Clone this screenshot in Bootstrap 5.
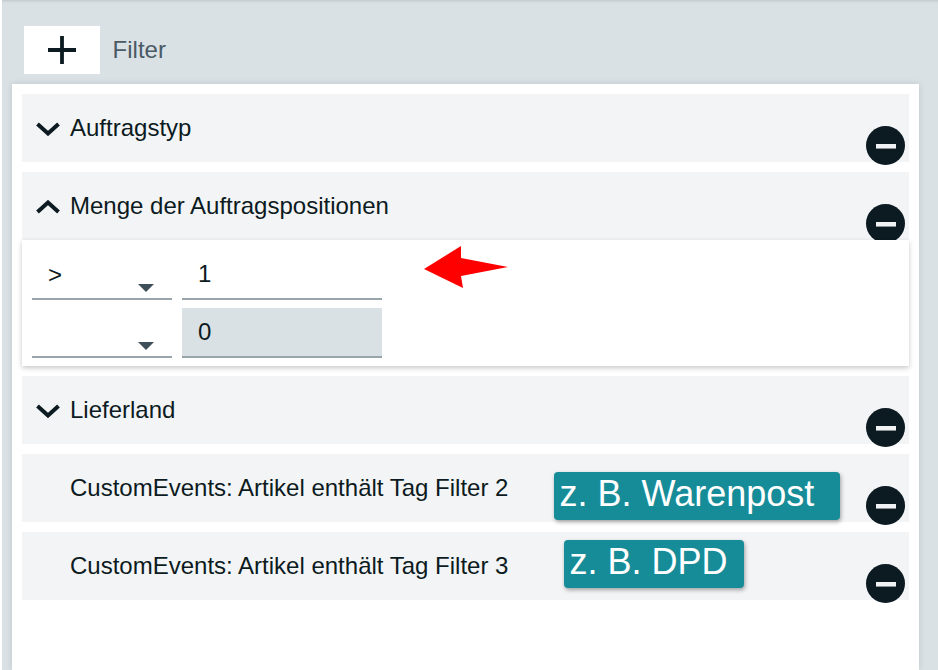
<!DOCTYPE html>
<html lang="de">
<head>
<meta charset="utf-8">
<title>Filter</title>
<link href="https://cdn.jsdelivr.net/npm/bootstrap@5.3.0/dist/css/bootstrap.min.css" rel="stylesheet">
<style>
html,body{height:100%;overflow:hidden}
body{background:#fff;font-family:"Liberation Sans",Arial,sans-serif;font-size:24px;color:#0c1a21;line-height:1.2}
.shell{height:670px;margin-left:2px;background:#dae1e4;padding-top:26px;box-shadow:inset 0 3px 3px -2px rgba(0,0,0,.12)}
.filter-head{height:48px;padding-left:22px;margin-bottom:10px}
.add-btn{width:76px;height:48px;background:#fff;border:0;border-radius:0;padding:0}
.filter-title{margin-left:12.6px;color:#4a5a64}
.sheet{margin-left:10px;width:907px;height:586px;background:#fff;padding:10px;box-shadow:0 0 6px rgba(0,0,0,.12)}
.frow{position:relative;height:68px;background:#f3f4f6;margin-bottom:10px;padding-left:48px}
.frow.open{margin-bottom:0}
.chev{position:absolute;left:14px;top:50%;margin-top:-6px}
.rm{position:absolute;left:844px;top:32px;width:39px;height:39px;border-radius:50%;background:#0c1a21;display:flex;align-items:center;justify-content:center}
.rm i{display:block;width:20px;height:4px;background:#f1f2f3;box-shadow:0 1px 0 #8b9296}
.fbody{position:relative;z-index:2;height:126px;background:#fff;padding:10px 10px 8px;margin-bottom:10px;box-shadow:0 2px 5px rgba(0,0,0,.22)}
.fline{height:50px;gap:10px;margin-bottom:8px}
.fline:last-child{margin-bottom:0}
.selbox{position:relative;width:140px;height:50px}
.selbox .form-select{height:50px;background:transparent none;border:0;border-bottom:2px solid #98a5ab;border-radius:0;font-size:24px;padding:2px 0 0 16px;color:#0c1a21;box-shadow:none}
.selbox::after{content:"";position:absolute;left:106px;top:34px;border:8px solid transparent;border-top-color:#3f4f59;border-bottom:0}
.numbox{width:200px;height:50px;border:0;border-bottom:2px solid #98a5ab;border-radius:0;font-size:24px;padding:0 0 0 16px;color:#0c1a21;background:transparent;box-shadow:none}
.numbox:disabled{background:#dae1e4;opacity:1}
.pointer{position:absolute;left:402px;top:5px}
.hint{position:absolute;height:48px;background:#178c99;color:#fff;font-size:36px;line-height:44px;padding-left:5.6px;border-radius:4px;box-shadow:1px 2px 4px rgba(0,0,0,.35);white-space:nowrap}
.hint-a{left:532px;top:18px;width:286px}
.hint-b{left:542px;top:8px;width:180px}
</style>
</head>
<body>
<div class="shell">
  <div class="filter-head d-flex align-items-center">
    <button class="add-btn d-flex align-items-center justify-content-center" type="button" aria-label="Filter hinzufügen">
      <svg width="28" height="28" viewBox="0 0 28 28"><path d="M14 0V28M0 14H28" stroke="#0c1a21" stroke-width="3.8" fill="none"/></svg>
    </button>
    <span class="filter-title">Filter</span>
  </div>
  <div class="sheet">
    <div class="frow d-flex align-items-center">
      <svg class="chev" width="24" height="14" viewBox="0 0 24 14"><path d="M1.5 2L12 11.5L22.5 2" stroke="#0c1a21" stroke-width="4" fill="none"/></svg>
      <span>Auftragstyp</span>
      <span class="rm"><i></i></span>
    </div>
    <div class="frow open d-flex align-items-center">
      <svg class="chev" width="24" height="14" viewBox="0 0 24 14"><path d="M1.5 12L12 2.5L22.5 12" stroke="#0c1a21" stroke-width="4" fill="none"/></svg>
      <span>Menge der Auftragspositionen</span>
      <span class="rm"><i></i></span>
    </div>
    <div class="fbody">
      <div class="fline d-flex">
        <div class="selbox"><select class="form-select" aria-label="Operator"><option>&gt;</option></select></div>
        <input class="form-control numbox" type="text" value="1" aria-label="Wert">
      </div>
      <div class="fline d-flex">
        <div class="selbox"><select class="form-select" aria-label="Operator 2"><option></option></select></div>
        <input class="form-control numbox" type="text" value="0" disabled aria-label="Wert 2">
      </div>
      <svg class="pointer" width="86" height="44" viewBox="0 0 86 44"><polygon points="0,24 37,1 37,13 84,22 37,31 39,43" fill="#ff0000"/></svg>
    </div>
    <div class="frow d-flex align-items-center">
      <svg class="chev" width="24" height="14" viewBox="0 0 24 14"><path d="M1.5 2L12 11.5L22.5 2" stroke="#0c1a21" stroke-width="4" fill="none"/></svg>
      <span>Lieferland</span>
      <span class="rm"><i></i></span>
    </div>
    <div class="frow d-flex align-items-center">
      <span>CustomEvents: Artikel enthält Tag Filter 2</span>
      <span class="hint hint-a">z. B. Warenpost</span>
      <span class="rm"><i></i></span>
    </div>
    <div class="frow d-flex align-items-center">
      <span>CustomEvents: Artikel enthält Tag Filter 3</span>
      <span class="hint hint-b">z. B. DPD</span>
      <span class="rm"><i></i></span>
    </div>
  </div>
</div>
<script src="https://cdn.jsdelivr.net/npm/bootstrap@5.3.0/dist/js/bootstrap.bundle.min.js"></script>
</body>
</html>
